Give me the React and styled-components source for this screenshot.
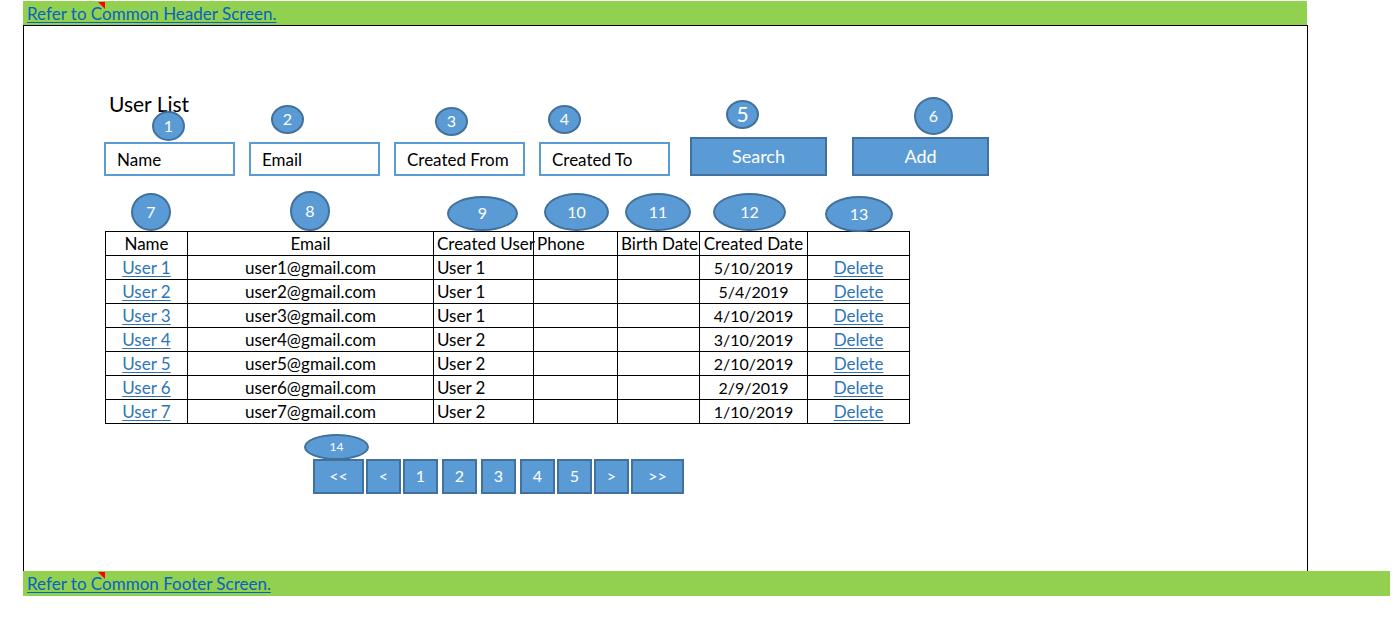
import React from "react";
import styled, { createGlobalStyle } from "styled-components";

const GlobalStyle = createGlobalStyle`
  *, *::before, *::after { box-sizing: border-box; }
  body {
    margin: 0;
    background: #fff;
    color: #000;
    font-family: Lato, "Liberation Sans", sans-serif;
    font-size: 17px;
    line-height: 24px;
  }
`;

const Page = styled.div`
  padding: 1px 9px 0 23px;
`;

const Bar = styled.div`
  position: relative;
  display: flex;
  align-items: flex-start;
  height: ${(p) => p.$height}px;
  margin-right: ${(p) => p.$inset}px;
  padding: 1px 4px 0;
  background: #92d050;
`;

const CommentMark = styled.span`
  position: absolute;
  top: 1px;
  left: 75px;
  width: 7px;
  height: 7px;
  background: #f00;
  clip-path: polygon(0 0, 100% 0, 100% 100%);
`;

const BarLink = styled.a`
  color: #0563c1;
  text-decoration: underline;
  text-decoration-skip-ink: none;
  text-underline-offset: 2px;
  white-space: nowrap;
`;

const Frame = styled.main`
  margin-right: 82px;
  padding: 66px 80px 77px;
  border: solid #000;
  border-width: 1px 1px 0;
`;

const Title = styled.h1`
  margin: 0 0 21px;
  padding-left: 5px;
  font-size: 21px;
  line-height: 24px;
  font-weight: 400;
`;

const SearchForm = styled.form`
  display: flex;
  align-items: flex-end;
  gap: 14px;
`;

const Actions = styled.div`
  display: flex;
  gap: 25px;
  margin-left: 6px;
`;

const Anchor = styled.div`
  position: relative;
`;

const Callout = styled.span`
  position: absolute;
  z-index: 1;
  left: ${(p) => p.$left}px;
  bottom: calc(100% + ${(p) => p.$gap || 0}px);
  display: flex;
  align-items: center;
  justify-content: center;
  width: ${(p) => p.$w}px;
  height: ${(p) => p.$h}px;
  padding-bottom: 1px;
  border: 2px solid #41719c;
  border-radius: 50%;
  background: #5b9bd5;
  color: #fff;
  font-size: ${(p) => p.$size || 16}px;
  line-height: 20px;
`;

const TextBox = styled.input`
  display: block;
  width: 131px;
  height: 34px;
  padding: 1px 11px 0;
  border: 2px solid #5b9bd5;
  border-radius: 0;
  background: #fff;
  color: #000;
  font: inherit;
  &::placeholder { color: #000; opacity: 1; }
`;

const Button = styled.button`
  display: block;
  height: 39px;
  width: 137px;
  padding: 0 0 1px;
  border: 2px solid #41719c;
  border-radius: 0;
  background: #5b9bd5;
  color: #fff;
  font: inherit;
  font-size: 18px;
`;

const Table = styled.table`
  width: 805px;
  margin: 55px 0 35px 1px;
  border-collapse: collapse;
  table-layout: fixed;
`;

const Col = styled.col`
  width: ${(p) => p.$w}px;
`;

const cell = (p) => `
  height: 24px;
  padding: 0 0 0 ${p.$left ? 3 : 0}px;
  border: 1px solid #000;
  font-size: ${p.$numeric ? 16 : 17}px;
  font-weight: 400;
  line-height: 23px;
  text-align: ${p.$left ? "left" : "center"};
  white-space: nowrap;
`;

const HeadCell = styled.th`
  ${cell}
  position: relative;
`;

const Cell = styled.td`
  ${cell}
`;

const RowLink = styled.a`
  color: #2e75b6;
  text-decoration: underline;
  text-decoration-skip-ink: none;
  text-underline-offset: 2px;
`;

const Pager = styled.nav`
  position: relative;
  display: flex;
  gap: 2px;
  width: fit-content;
  margin-left: 209px;
`;

const PageButton = styled(Button)`
  width: ${(p) => p.$w || 35}px;
  height: 35px;
  margin-right: ${(p) => (p.$spaced ? 2 : 0)}px;
  font-size: 16px;
`;

const fields = [
  { label: "Name", mark: { n: 1, $left: 48, $gap: 1, $w: 33, $h: 30 } },
  { label: "Email", mark: { n: 2, $left: 22, $gap: 8, $w: 33, $h: 29 } },
  { label: "Created From", mark: { n: 3, $left: 41, $gap: 6, $w: 33, $h: 29 } },
  { label: "Created To", mark: { n: 4, $left: 9, $gap: 8, $w: 33, $h: 29 } },
];

const columns = [
  { label: "Name", width: 82, mark: { n: 7, $left: 25, $gap: 1, $w: 40, $h: 38 } },
  { label: "Email", width: 246, mark: { n: 8, $left: 102, $gap: 1, $w: 40, $h: 40 } },
  { label: "Created User", width: 100, left: true, mark: { n: 9, $left: 13, $gap: 1, $w: 71, $h: 35 } },
  { label: "Phone", width: 84, left: true, mark: { n: 10, $left: 10, $gap: 1, $w: 65, $h: 38 } },
  { label: "Birth Date", width: 82, left: true, mark: { n: 11, $left: 7, $gap: 1, $w: 66, $h: 38 } },
  { label: "Created Date", width: 108, mark: { n: 12, $left: 13, $gap: 1, $w: 73, $h: 38 } },
  { label: "", width: 102, mark: { n: 13, $left: 17, $gap: 0, $w: 68, $h: 36 } },
];

const users = [
  ["User 1", "user1@gmail.com", "User 1", "5/10/2019"],
  ["User 2", "user2@gmail.com", "User 1", "5/4/2019"],
  ["User 3", "user3@gmail.com", "User 1", "4/10/2019"],
  ["User 4", "user4@gmail.com", "User 2", "3/10/2019"],
  ["User 5", "user5@gmail.com", "User 2", "2/10/2019"],
  ["User 6", "user6@gmail.com", "User 2", "2/9/2019"],
  ["User 7", "user7@gmail.com", "User 2", "1/10/2019"],
];

const pages = [
  { text: "<<", w: 51 },
  { text: "<" },
  { text: "1", spaced: true },
  { text: "2", spaced: true },
  { text: "3", spaced: true },
  { text: "4" },
  { text: "5" },
  { text: ">" },
  { text: ">>", w: 53 },
];

const Mark = ({ n, ...shape }) => <Callout {...shape}>{n}</Callout>;

export default function App() {
  return (
    <>
      <GlobalStyle />
      <Page>
        <Bar as="header" $height={24} $inset={83}>
          <BarLink href="#header">Refer to Common Header Screen.</BarLink>
          <CommentMark />
        </Bar>
        <Frame>
          <Title>User List</Title>
          <SearchForm onSubmit={(e) => e.preventDefault()}>
            {fields.map((f) => (
              <Anchor key={f.label}>
                <TextBox type="text" aria-label={f.label} placeholder={f.label} />
                <Mark {...f.mark} />
              </Anchor>
            ))}
            <Actions>
              <Anchor>
                <Button type="submit">Search</Button>
                <Mark n={5} $left={36} $gap={8} $w={33} $h={29} $size={21} />
              </Anchor>
              <Anchor>
                <Button type="button">Add</Button>
                <Mark n={6} $left={62} $gap={2} $w={39} $h={38} />
              </Anchor>
            </Actions>
          </SearchForm>
          <Table>
            <colgroup>
              {columns.map((c) => (
                <Col key={c.label} $w={c.width} />
              ))}
            </colgroup>
            <thead>
              <tr>
                {columns.map((c) => (
                  <HeadCell key={c.label} scope="col" $left={c.left}>
                    {c.label}
                    <Mark {...c.mark} />
                  </HeadCell>
                ))}
              </tr>
            </thead>
            <tbody>
              {users.map(([name, email, creator, date]) => (
                <tr key={name}>
                  <Cell><RowLink href="#user">{name}</RowLink></Cell>
                  <Cell>{email}</Cell>
                  <Cell $left>{creator}</Cell>
                  <Cell />
                  <Cell />
                  <Cell $numeric>{date}</Cell>
                  <Cell><RowLink href="#delete">Delete</RowLink></Cell>
                </tr>
              ))}
            </tbody>
          </Table>
          <Pager aria-label="Pages">
            {pages.map((p) => (
              <PageButton key={p.text} type="button" $w={p.w} $spaced={p.spaced}>
                {p.text}
              </PageButton>
            ))}
            <Mark n={14} $left={-9} $gap={-1} $w={65} $h={26} $size={12} />
          </Pager>
        </Frame>
        <Bar as="footer" $height={25} $inset={0}>
          <BarLink href="#footer">Refer to Common Footer Screen.</BarLink>
          <CommentMark />
        </Bar>
      </Page>
    </>
  );
}
